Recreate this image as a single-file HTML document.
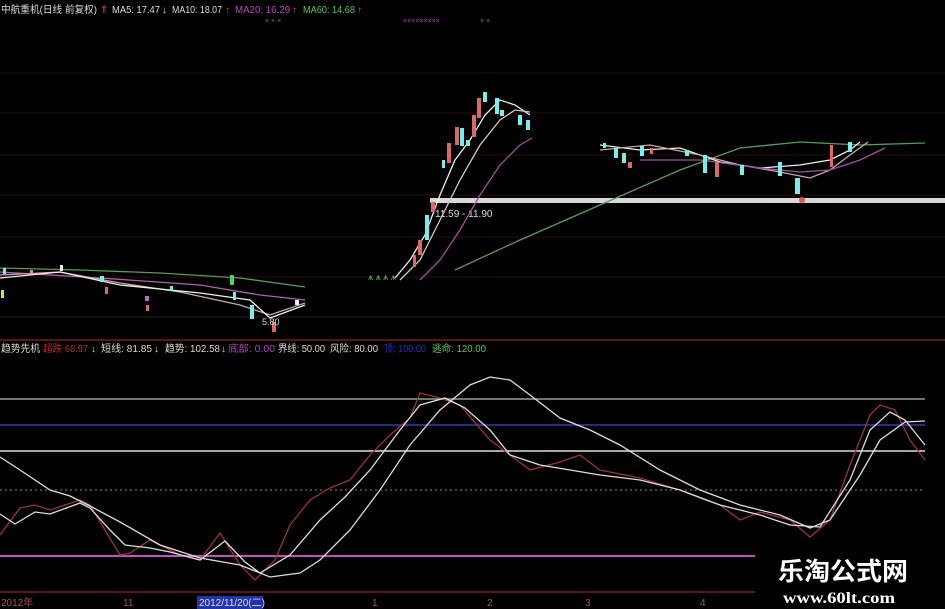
<!DOCTYPE html>
<html><head><meta charset="utf-8"><style>
html,body{margin:0;padding:0;background:#000;}
svg{display:block;font-family:"Liberation Sans","Noto Sans CJK SC",sans-serif;}
</style></head><body>
<svg width="945" height="609" viewBox="0 0 945 609" xmlns="http://www.w3.org/2000/svg">
<rect width="945" height="609" fill="#000"/>
<g stroke="#2e0b0b" stroke-width="1">
<line x1="0" y1="73" x2="945" y2="73"/><line x1="0" y1="113" x2="945" y2="113"/>
<line x1="0" y1="155" x2="945" y2="155"/><line x1="0" y1="195" x2="945" y2="195"/>
<line x1="0" y1="237" x2="945" y2="237"/><line x1="0" y1="277" x2="945" y2="277"/>
<line x1="0" y1="317" x2="945" y2="317" stroke="#222"/>
</g>
<line x1="0" y1="340" x2="945" y2="340" stroke="#7a1a1a" stroke-width="1.5"/>
<g font-size="10">
<text x="1" y="13" fill="#ddd" textLength="96" lengthAdjust="spacingAndGlyphs">中航重机(日线 前复权)</text>
<text x="100" y="13" fill="#e44">⇑</text>
<text x="112" y="13" fill="#ddd" textLength="48" lengthAdjust="spacingAndGlyphs">MA5: 17.47</text><text x="162" y="13" fill="#ddd">↓</text>
<text x="172" y="13" fill="#ddd" textLength="50" lengthAdjust="spacingAndGlyphs">MA10: 18.07</text><text x="225" y="13" fill="#e44">↑</text>
<text x="235" y="13" fill="#c040c0" textLength="55" lengthAdjust="spacingAndGlyphs">MA20: 16.29</text><text x="292" y="13" fill="#e44">↑</text>
<text x="303" y="13" fill="#5c5" textLength="52" lengthAdjust="spacingAndGlyphs">MA60: 14.68</text><text x="357" y="13" fill="#e44">↑</text>
<text x="265" y="23" fill="#b040c0" font-size="7">× ×  ×</text>
<text x="403" y="23" fill="#b040c0" font-size="7">×××××××××</text>
<text x="480" y="23" fill="#b040c0" font-size="7">× ×</text>
</g>
<rect x="430" y="198" width="515" height="5" fill="#d8d8d8"/>
<text x="435" y="217" fill="#ddd" font-size="10">11.59 - 11.90</text>
<g fill="none" stroke-width="1.3">
<polyline stroke="#5a9a5a" points="0,268 80,270 160,273 240,278 305,287"/>
<polyline stroke="#5a9a5a" points="455,270 520,240 600,205 680,170 740,148 800,142 860,145 925,143"/>
<polyline stroke="#b060b0" points="0,272 100,278 200,285 260,295 305,300"/>
<polyline stroke="#c8a8a8" points="0,275 60,272 120,283 180,292 240,305 270,315 305,303"/>
<polyline stroke="#eee" points="0,278 60,272 120,285 200,293 250,300 270,318 305,305"/>
<polyline stroke="#eee" points="395,278 410,260 425,235 440,195 455,160 470,140 485,115 500,100 515,105 530,115"/>
<polyline stroke="#d8c8c8" points="400,280 420,260 440,220 460,180 480,145 500,120 515,110 530,112"/>
<polyline stroke="#a050a0" points="420,280 440,260 460,230 480,195 500,165 520,145 532,138"/>
<polyline stroke="#eee" points="600,145 640,150 680,148 720,162 760,168 800,165 830,160 850,150 860,142"/>
<polyline stroke="#c8a8a8" points="600,150 650,145 700,155 740,165 780,172 810,178 830,170 850,155 868,142"/>
<polyline stroke="#a050a0" points="640,160 700,160 760,168 800,172 830,170 860,160 885,148"/>
</g>
<g>
<rect x="3" y="268" width="3" height="6" fill="#7ee"/><rect x="1" y="290" width="3" height="8" fill="#dd5"/>
<rect x="30" y="270" width="3" height="4" fill="#e88"/><rect x="60" y="265" width="3" height="6" fill="#eee"/>
<rect x="100" y="276" width="4" height="6" fill="#7ee"/><rect x="105" y="287" width="3" height="7" fill="#d66"/>
<rect x="145" y="296" width="4" height="5" fill="#b6c"/><rect x="146" y="305" width="3" height="6" fill="#d66"/>
<rect x="170" y="286" width="3" height="5" fill="#7ee"/><rect x="230" y="275" width="4" height="10" fill="#5c5"/>
<rect x="233" y="292" width="3" height="8" fill="#7ee"/><rect x="250" y="305" width="4" height="14" fill="#7ee"/>
<rect x="272" y="322" width="4" height="10" fill="#d66"/><rect x="295" y="300" width="4" height="5" fill="#eee"/>
<text x="262" y="325" fill="#ddd" font-size="9">5.80</text>
<text x="368" y="280" fill="#5c5" font-size="9">⩚ ⩚ ⩚ ⩚</text>
<rect x="413" y="255" width="3" height="12" fill="#d66"/><rect x="418" y="240" width="4" height="15" fill="#d66"/>
<rect x="425" y="215" width="4" height="25" fill="#7ee"/><rect x="431" y="202" width="4" height="10" fill="#d66"/>
<rect x="442" y="160" width="3" height="8" fill="#7ee"/><rect x="447" y="143" width="4" height="20" fill="#d66"/>
<rect x="455" y="127" width="4" height="18" fill="#d66"/><rect x="460" y="128" width="4" height="18" fill="#7ee"/>
<rect x="466" y="140" width="4" height="6" fill="#7ee"/><rect x="472" y="115" width="4" height="22" fill="#d66"/>
<rect x="477" y="98" width="4" height="20" fill="#d66"/><rect x="483" y="92" width="4" height="10" fill="#7ee"/>
<rect x="495" y="98" width="4" height="16" fill="#7ee"/><rect x="500" y="110" width="4" height="6" fill="#7ee"/>
<rect x="518" y="115" width="4" height="10" fill="#7ee"/><rect x="526" y="120" width="4" height="10" fill="#7ee"/>
<rect x="603" y="143" width="3" height="5" fill="#7ee"/><rect x="614" y="148" width="4" height="10" fill="#7ee"/>
<rect x="622" y="153" width="4" height="10" fill="#7ee"/><rect x="628" y="162" width="4" height="6" fill="#d66"/>
<rect x="640" y="146" width="4" height="10" fill="#7ee"/><rect x="650" y="148" width="3" height="6" fill="#d66"/>
<rect x="685" y="150" width="4" height="6" fill="#7ee"/><rect x="703" y="155" width="4" height="18" fill="#7ee"/>
<rect x="715" y="162" width="4" height="15" fill="#d66"/><rect x="740" y="165" width="4" height="10" fill="#7ee"/>
<rect x="778" y="162" width="4" height="14" fill="#7ee"/><rect x="795" y="178" width="5" height="16" fill="#7ee"/>
<circle cx="802" cy="200" r="3" fill="#d55"/><rect x="830" y="145" width="3" height="22" fill="#d66"/>
<rect x="848" y="142" width="4" height="10" fill="#7ee"/>
</g>
<g font-size="10">
<text x="1" y="352" fill="#ddd" textLength="39" lengthAdjust="spacingAndGlyphs">趋势先机</text>
<text x="43" y="352" fill="#c22" textLength="19" lengthAdjust="spacingAndGlyphs">超跌</text>
<text x="65" y="352" fill="#a33" textLength="23" lengthAdjust="spacingAndGlyphs">68.97</text><text x="91" y="352" fill="#ddd">↓</text>
<text x="101" y="352" fill="#ddd" textLength="51" lengthAdjust="spacingAndGlyphs">短线: 81.85</text><text x="154" y="352" fill="#ddd">↓</text>
<text x="165" y="352" fill="#ddd" textLength="55" lengthAdjust="spacingAndGlyphs">趋势: 102.58</text><text x="221" y="352" fill="#ddd">↓</text>
<text x="228" y="352" fill="#b040c0" textLength="47" lengthAdjust="spacingAndGlyphs">底部: 0.00</text>
<text x="278" y="352" fill="#ddd" textLength="47" lengthAdjust="spacingAndGlyphs">界线: 50.00</text>
<text x="330" y="352" fill="#ddd" textLength="48" lengthAdjust="spacingAndGlyphs">风险: 80.00</text>
<text x="384" y="352" fill="#2233bb" textLength="42" lengthAdjust="spacingAndGlyphs">顶: 100.00</text>
<text x="432" y="352" fill="#5c5" textLength="54" lengthAdjust="spacingAndGlyphs">逃命: 120.00</text>
</g>
<line x1="0" y1="399" x2="925" y2="399" stroke="#8aa88a" stroke-width="1.5"/>
<line x1="0" y1="425" x2="925" y2="425" stroke="#2a2a88" stroke-width="2"/>
<line x1="0" y1="451" x2="925" y2="451" stroke="#ddd" stroke-width="1.5"/>
<line x1="0" y1="490" x2="925" y2="490" stroke="#a08080" stroke-width="1" stroke-dasharray="2,3"/>
<line x1="0" y1="556" x2="755" y2="556" stroke="#c050c0" stroke-width="2"/>
<g fill="none" stroke-width="1.3">
<polyline stroke="#9a3535" points="0,535 20,508 35,505 50,510 80,500 90,505 105,530 120,555 130,553 150,540 180,555 200,560 220,533 240,565 255,580 275,560 290,525 310,500 330,488 350,480 370,455 390,435 410,418 420,393 440,398 460,405 490,440 510,455 530,470 560,462 580,455 600,470 640,478 680,490 700,498 720,505 740,520 760,512 790,520 810,537 830,520 850,465 870,415 880,405 895,410 910,440 925,460"/>
<polyline stroke="#ddd" points="0,514 15,524 35,512 50,514 80,503 90,508 110,530 125,545 150,548 170,552 200,560 225,541 245,562 260,573 290,555 320,520 345,497 370,470 400,430 420,405 445,398 465,408 490,430 510,455 540,465 570,470 600,475 640,480 680,490 720,505 760,515 790,525 820,527 850,480 870,430 890,412 905,420 925,445"/>
<polyline stroke="#ddd" points="0,457 20,470 50,490 70,496 90,506 120,522 160,545 200,558 240,565 270,577 300,573 320,560 350,530 380,490 410,445 440,410 470,385 490,377 510,380 530,395 560,418 590,430 620,445 660,470 700,490 740,505 780,515 810,528 830,520 860,475 880,440 905,422 925,421"/>
</g>
<line x1="0" y1="592" x2="755" y2="592" stroke="#7a1a1a" stroke-width="1.5"/>
<rect x="197" y="596" width="66" height="13" fill="#2233aa"/>
<g font-size="10" fill="#b05050">
<text x="1" y="606">2012年</text><text x="123" y="606">11</text>
<text x="199" y="606" fill="#ddd">2012/11/20(二)</text>
<text x="372" y="606">1</text><text x="487" y="606">2</text><text x="585" y="606">3</text><text x="700" y="606">4</text>
</g>
<text x="778" y="580" fill="#fff" font-size="25" font-weight="bold" textLength="130" lengthAdjust="spacingAndGlyphs">乐淘公式网</text>
<text x="783" y="603" fill="#fff" font-size="16" font-weight="bold" font-family="Liberation Serif,serif" textLength="112" lengthAdjust="spacingAndGlyphs">www.60lt.com</text>
</svg>
</body></html>
